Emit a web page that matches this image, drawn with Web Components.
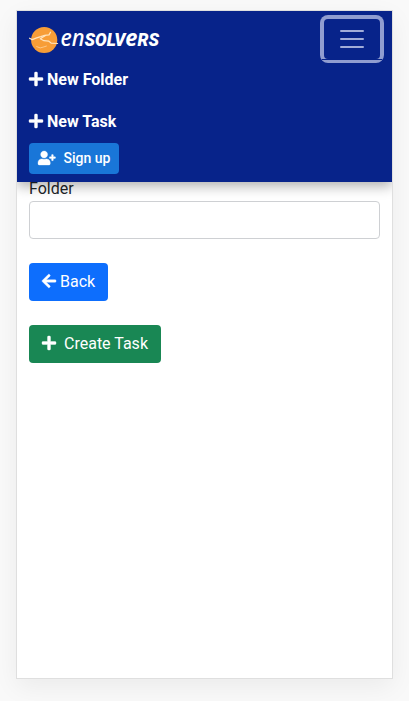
<!DOCTYPE html>
<html lang="en">
<head>
<meta charset="utf-8">
<title>Ensolvers</title>
<style>
html, body { height: 100%; }
body { margin: 0; background: #f9f9f9; font: 16px/24px Roboto, "Liberation Sans", sans-serif; color: #212529; overflow: hidden; }
</style>
</head>
<body>
<app-card>
  <nav-bar slot="header">
    <brand-logo slot="brand"></brand-logo>
    <menu-toggle slot="toggle"></menu-toggle>
    <nav-item icon="plus">New Folder</nav-item>
    <nav-item icon="plus">New Task</nav-item>
    <app-button variant="signup" icon="user-plus">Sign up</app-button>
  </nav-bar>
  <text-field label="Folder"></text-field>
  <app-button variant="primary" icon="arrow-left">Back</app-button>
  <app-button variant="success" icon="plus">Create Task</app-button>
</app-card>
<script>
const define = (name, render) => customElements.define(name, class extends HTMLElement {
  constructor() {
    super();
    this.attachShadow({ mode: "open" });
  }
  connectedCallback() {
    this.shadowRoot.innerHTML = render(this);
  }
});

const icons = {
  "plus": [448, "M416 208H272V64c0-17.67-14.33-32-32-32h-32c-17.67 0-32 14.33-32 32v144H32c-17.67 0-32 14.33-32 32v32c0 17.67 14.33 32 32 32h144v144c0 17.67 14.33 32 32 32h32c17.67 0 32-14.33 32-32V304h144c17.67 0 32-14.33 32-32v-32c0-17.67-14.33-32-32-32z"],
  "arrow-left": [448, "M257.5 445.1l-22.2 22.2c-9.4 9.4-24.6 9.4-33.9 0L7 273c-9.4-9.4-9.4-24.6 0-33.9L201.4 44.7c9.4-9.4 24.6-9.4 33.9 0l22.2 22.2c9.5 9.5 9.3 25-.4 34.3L136.6 216H424c13.3 0 24 10.7 24 24v32c0 13.3-10.7 24-24 24H136.6l120.5 114.8c9.8 9.3 10 24.8.4 34.3z"],
  "user-plus": [640, "M624 208h-64v-64c0-8.8-7.2-16-16-16h-32c-8.8 0-16 7.2-16 16v64h-64c-8.8 0-16 7.2-16 16v32c0 8.8 7.2 16 16 16h64v64c0 8.8 7.2 16 16 16h32c8.8 0 16-7.2 16-16v-64h64c8.8 0 16-7.2 16-16v-32c0-8.8-7.2-16-16-16zm-400 48c70.7 0 128-57.3 128-128S294.7 0 224 0 96 57.3 96 128s57.3 128 128 128zm89.6 32h-16.7c-22.2 10.2-46.9 16-72.9 16s-50.6-5.8-72.9-16h-16.7C60.2 288 0 348.2 0 422.4V464c0 26.5 21.5 48 48 48h352c26.5 0 48-21.5 48-48v-41.6c0-74.2-60.2-134.4-134.4-134.4z"]
};

define("fa-icon", el => {
  const [w, d] = icons[el.getAttribute("name")];
  return `<style>:host{display:inline-flex;flex:none;margin-bottom:2px}svg{width:${w / 512}em;height:1em;fill:currentColor;stroke:currentColor;stroke-width:12;overflow:visible;display:block}</style>
  <svg viewBox="0 0 ${w} 512"><path d="${d}"/></svg>`;
});

define("app-card", () => `<style>
  :host{display:flex;flex-direction:column;box-sizing:border-box;width:377px;height:669px;margin:10px 0 0 16px;border:1px solid #dfdfdf;background:#fff;box-shadow:0 8px 24px rgba(0,0,0,.06)}
  main{display:flex;flex-direction:column;align-items:flex-start;gap:24px;padding:0 12px}
  ::slotted([slot=header]){z-index:1}
</style><slot name="header"></slot><main><slot></slot></main>`);

define("nav-bar", () => `<style>
  :host{display:block;box-sizing:border-box;height:171px;padding:8px 12px;background:#07238a;color:#fff;box-shadow:0 4px 12px rgba(0,0,0,.32);position:relative;clip-path:inset(0 0 -30px 0)}
  header{display:flex;justify-content:space-between;height:41px}
  nav{display:flex;flex-direction:column;align-items:flex-start;gap:2px}
  ::slotted(app-button){margin-top:-1px}
</style><header><slot name="brand"></slot><slot name="toggle"></slot></header><nav><slot></slot></nav>`);

define("brand-logo", () => `<style>:host{display:block}svg{display:block;overflow:visible}
  text{font-family:"Noto Sans","Open Sans",sans-serif;font-style:italic;fill:#fff}
  .b{font-family:Roboto,sans-serif;font-size:18.3px;font-weight:900}</style>
<svg width="134" height="40" viewBox="29 19 134 40">
  <circle cx="44.2" cy="40" r="13.1" fill="#f79d37"/>
  <g fill="none" stroke="#ffe3bd" stroke-linecap="round" stroke-linejoin="round">
    <path d="M29.6 38.2l2.6 1.4 4.5-1.7 4-1.2 4-1.4 4.3-.4 1.5-2.6" stroke-width="1.3"/>
    <path d="M45.5 35.5l-5.2 3.2 3.6 2 4.6.4 2.6 2 6.5.4" stroke-width="1.2"/>
    <path d="M36.7 46.6l3.5 1.3 3-.8 3.2-1" stroke-width=".8" opacity=".75"/>
  </g>
  <text x="60.5" y="46.2" font-size="23" font-weight="500" textLength="98.5" lengthAdjust="spacingAndGlyphs">en<tspan class="b">SOLV</tspan><tspan font-weight="700">e</tspan><tspan class="b">RS</tspan></text>
</svg>`);

define("menu-toggle", () => `<style>
  :host{display:block}
  button{position:relative;display:flex;flex-direction:column;align-items:center;justify-content:center;gap:6px;width:56px;height:40px;box-sizing:border-box;border:0;border-radius:4px;background:none;padding:0;box-shadow:0 0 0 4px #909dd0}
  button::after{content:"";position:absolute;left:-2px;right:-2px;top:40px;height:1px;background:#07238a}
  i{width:24px;height:2px;border-radius:1px;background:#a1acd8}
</style><button aria-label="Toggle navigation"><i></i><i></i><i></i></button>`);

define("nav-item", el => `<style>
  :host{display:flex;align-items:center;gap:4px;height:40px;font-weight:700}
</style><fa-icon name="${el.getAttribute("icon")}"></fa-icon><span><slot></slot></span>`);

define("app-button", el => `<style>
  :host{display:block}
  button{display:flex;align-items:center;height:38px;padding:0 13px;border:0;border-radius:4px;background:#0d6efd;color:#fff;font:inherit;gap:4px;white-space:nowrap}
  :host([variant=success]) button{background:#198754;gap:8px}
  :host([variant=signup]) button{height:31px;padding:0 9px;background:#1976d8;font-size:14px;font-weight:500;gap:8px}
  :host([variant=signup]) span{margin-top:-1px}
</style><button><fa-icon name="${el.getAttribute("icon")}"></fa-icon><span><slot></slot></span></button>`);

define("text-field", el => `<style>
  :host{display:block;align-self:stretch}
  label{display:block;height:19px;line-height:13px}
  input{display:block;box-sizing:border-box;width:100%;height:38px;border:1px solid #ced0d3;border-radius:4px;background:#fff;font:inherit;padding:6px 12px}
</style><label>${el.getAttribute("label")}</label><input type="text">`);
</script>
</body>
</html>
